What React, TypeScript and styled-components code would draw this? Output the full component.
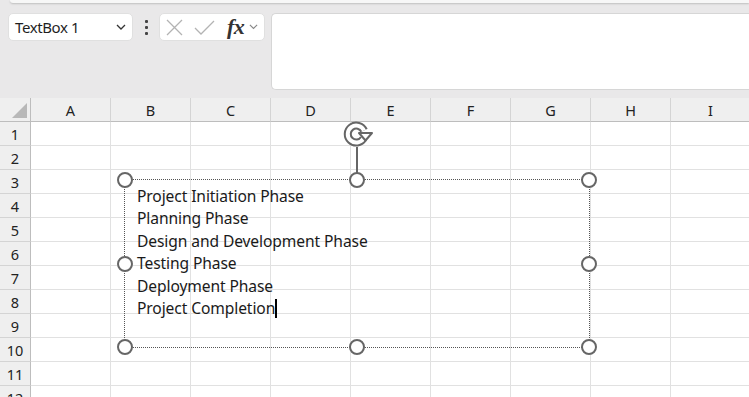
import React from "react";
import styled, { createGlobalStyle } from "styled-components";

const GlobalStyle = createGlobalStyle`
  html, body {
    margin: 0;
    padding: 0;
    background: #ffffff;
    overflow: hidden;
  }
  body {
    font-family: "Noto Sans", "Open Sans", sans-serif;
  }
`;

const Page = styled.div`
  width: 749px;
  height: 397px;
  overflow: hidden;
  display: flex;
  flex-direction: column;
`;

// ---- formula bar area ----
const TopArea = styled.div`
  height: 98px;
  background: #e9e8e9;
  display: flex;
  flex-direction: column;
  flex-shrink: 0;
`;

const RibbonEdge = styled.div`
  height: 3px;
  margin-left: 10px;
  background: #f7f7f7;
  border-bottom-left-radius: 4px;
  box-shadow: 0 1px 2px rgba(0, 0, 0, 0.18);
`;

const FormulaRow = styled.div`
  display: flex;
  align-items: flex-start;
  padding: 10px 0 0 8px;
`;

const NameBox = styled.div`
  width: 125px;
  height: 28px;
  box-sizing: border-box;
  background: #ffffff;
  border-radius: 5px;
  border: 1px solid #e0e0e0;
  display: flex;
  align-items: center;
  justify-content: space-between;
  padding: 0 6px 0 6px;
  font-family: "Noto Sans", sans-serif;
  font-size: 15px;
  color: #1f1f1f;
  letter-spacing: -0.4px;
`;

const Dots = styled.div`
  width: 26px;
  height: 28px;
  display: flex;
  flex-direction: column;
  align-items: center;
  justify-content: center;
  gap: 3px;
  span {
    width: 3px;
    height: 3px;
    background: #444;
    border-radius: 1px;
  }
`;

const FxBox = styled.div`
  width: 106px;
  height: 28px;
  box-sizing: border-box;
  background: #ffffff;
  border-radius: 5px;
  border: 1px solid #e0e0e0;
  display: flex;
  align-items: center;
  padding: 0 0 0 6px;
  gap: 11px;
`;

const FxLabel = styled.span`
  font-family: "Liberation Serif", serif;
  font-style: italic;
  font-weight: bold;
  font-size: 22px;
  line-height: 22px;
  color: #333;
  margin-left: 1px;
  margin-right: -6px;
  letter-spacing: -0.5px;
`;

const FormulaInput = styled.div`
  flex: 1;
  height: 77px;
  margin-left: 6px;
  background: #ffffff;
  border: 1px solid #d6d6d6;
  border-right: none;
  border-radius: 5px 0 0 5px;
  box-sizing: border-box;
`;

// ---- grid ----
const Sheet = styled.div`
  position: relative;
  flex: 1;
`;

const Grid = styled.div`
  display: grid;
  grid-template-columns: 31px repeat(9, 80px);
  grid-template-rows: 24px repeat(12, 24px);
`;

const Corner = styled.div`
  background: #efefef;
  border-right: 1px solid #bdbdbd;
  border-bottom: 1px solid #bdbdbd;
  box-sizing: border-box;
  position: relative;
  &::after {
    content: "";
    position: absolute;
    right: 3px;
    bottom: 3px;
    width: 0;
    height: 0;
    border-left: 15px solid transparent;
    border-bottom: 15px solid #b8b8b8;
  }
`;

const ColHead = styled.div`
  background: #efefef;
  border-right: 1px solid #d4d4d4;
  border-bottom: 1px solid #bdbdbd;
  box-sizing: border-box;
  display: flex;
  align-items: center;
  justify-content: center;
  font-family: "Noto Sans", sans-serif;
  font-size: 14.5px;
  color: #222;
  padding-top: 1px;
`;

const RowHead = styled.div`
  background: #efefef;
  border-right: 1px solid #bdbdbd;
  border-bottom: 1px solid #d4d4d4;
  box-sizing: border-box;
  display: flex;
  align-items: center;
  justify-content: center;
  font-family: "Noto Sans", sans-serif;
  font-size: 14.5px;
  color: #222;
`;

const Cell = styled.div`
  border-right: 1px solid #e1e1e1;
  border-bottom: 1px solid #e1e1e1;
  box-sizing: border-box;
  background: #fff;
`;

// ---- text box shape (floats over the sheet) ----
const Shape = styled.div`
  position: absolute;
  left: 124px;
  top: 81px;
  width: 466px;
  height: 169px;
  box-sizing: border-box;
  border: 1px dotted #555;
`;

const ShapeText = styled.div`
  padding: 5px 0 0 12px;
  font-family: "Noto Sans", sans-serif;
  font-size: 15.6px;
  line-height: 22.4px;
  color: #1a1a1a;
  letter-spacing: -0.1px;
`;

const Caret = styled.span`
  display: inline-block;
  width: 2px;
  height: 19px;
  background: #000;
  vertical-align: -4px;
`;

const Handle = styled.div<{ $x: string; $y: string }>`
  position: absolute;
  left: ${(p) => p.$x};
  top: ${(p) => p.$y};
  width: 12px;
  height: 12px;
  margin: -8px 0 0 -8px;
  border: 2px solid #666;
  border-radius: 50%;
  background: #fff;
`;

const RotateStem = styled.div`
  position: absolute;
  left: 231px;
  top: -33px;
  width: 2px;
  height: 27px;
  background: #666;
`;

const RotateIcon = styled.svg`
  position: absolute;
  left: 217px;
  top: -59px;
`;

const cols = ["A", "B", "C", "D", "E", "F", "G", "H", "I"];
const rows = Array.from({ length: 12 }, (_, i) => i + 1);

const lines = [
  "Project Initiation Phase",
  "Planning Phase",
  "Design and Development Phase",
  "Testing Phase",
  "Deployment Phase",
];

const handles: [string, string][] = [
  ["0%", "0%"],
  ["50%", "0%"],
  ["100%", "0%"],
  ["0%", "50%"],
  ["100%", "50%"],
  ["0%", "100%"],
  ["50%", "100%"],
  ["100%", "100%"],
];

function Chevron({ color = "#333", size = 10 }: { color?: string; size?: number }) {
  return (
    <svg width={size} height={size * 0.6} viewBox="0 0 10 6">
      <path d="M1 1 L5 5 L9 1" fill="none" stroke={color} strokeWidth="1.3" />
    </svg>
  );
}

const ARC = "M21.5 17.5 A8.5 8.5 0 1 1 22 9.5";

export default function App() {
  return (
    <>
      <GlobalStyle />
      <Page>
        <TopArea>
          <RibbonEdge />
          <FormulaRow>
            <NameBox>
              <span>TextBox 1</span>
              <Chevron />
            </NameBox>
            <Dots>
              <span />
              <span />
              <span />
            </Dots>
            <FxBox>
              <svg width="17" height="17" viewBox="0 0 17 17">
                <path d="M1 1 L16 16 M16 1 L1 16" stroke="#b3b3b3" strokeWidth="1.3" />
              </svg>
              <svg width="21" height="17" viewBox="0 0 21 17">
                <path d="M1 9 L7 15 L20 2" fill="none" stroke="#b3b3b3" strokeWidth="1.3" />
              </svg>
              <FxLabel>fx</FxLabel>
              <Chevron color="#888" size={9} />
            </FxBox>
            <FormulaInput />
          </FormulaRow>
        </TopArea>

        <Sheet>
          <Grid>
            <Corner />
            {cols.map((c) => (
              <ColHead key={c}>{c}</ColHead>
            ))}
            {rows.map((r) => (
              <React.Fragment key={r}>
                <RowHead>{r}</RowHead>
                {cols.map((c) => (
                  <Cell key={c + r} />
                ))}
              </React.Fragment>
            ))}
          </Grid>

          <Shape>
            <RotateIcon width="32" height="28" viewBox="0 0 32 28">
              <path d={ARC} fill="none" stroke="#666" strokeWidth="8" />
              <path d={ARC} fill="none" stroke="#fff" strokeWidth="4" />
              <path
                d="M17 12 L30 12 L23.5 19.5 Z"
                fill="#fff"
                stroke="#666"
                strokeWidth="2"
                strokeLinejoin="round"
              />
            </RotateIcon>
            <RotateStem />
            <ShapeText>
              {lines.map((l) => (
                <div key={l}>{l}</div>
              ))}
              <div>
                Project Completion
                <Caret />
              </div>
            </ShapeText>
            {handles.map(([x, y]) => (
              <Handle key={x + y} $x={x} $y={y} />
            ))}
          </Shape>
        </Sheet>
      </Page>
    </>
  );
}
